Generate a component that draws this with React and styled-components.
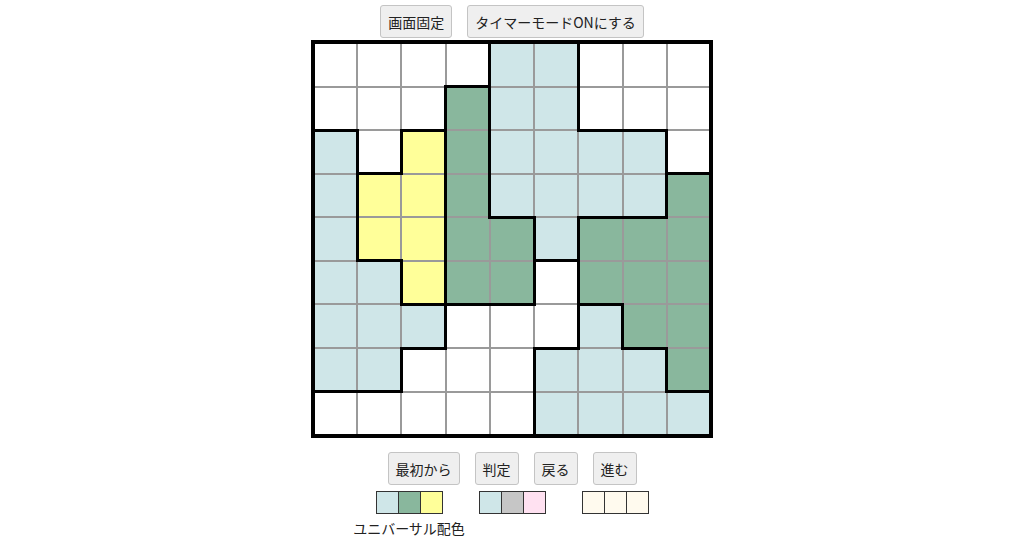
import React from 'react';
import styled, { createGlobalStyle } from 'styled-components';

const GlobalStyle = createGlobalStyle`
    body {
        margin: 0;
        background: #fff;
        font-family: "Noto Sans CJK JP", "Noto Sans", sans-serif;
        color: #222;
    }
`;

const COLORS = {
    W: '#ffffff',
    L: '#cfe6e8',
    G: '#89b79d',
    Y: '#ffff99',
};

const BOARD = [
    'WWWWLLWWW',
    'WWWGLLWWW',
    'LWYGLLLLW',
    'LYYGLLLLG',
    'LYYGGLGGG',
    'LLYGGWGGG',
    'LLLWWWLGG',
    'LLWWWLLLG',
    'WWWWWLLLL',
];

const PALETTES = [
    { colors: ['#cfe6e8', '#89b79d', '#ffff99'], label: 'ユニバーサル配色' },
    { colors: ['#cfe6e8', '#c6c6c6', '#ffe1f1'] },
    { colors: ['#fffaee', '#fffaee', '#fffaee'] },
];

const THIN = '2px solid #9a9a9a';
const THICK = '3px solid #000';
const EDGE = '4px solid #000';

const side = (r, c, dr, dc) => {
    const nr = r + dr;
    const nc = c + dc;
    if (nr < 0 || nr > 8 || nc < 0 || nc > 8) return EDGE;
    return BOARD[nr][nc] === BOARD[r][c] ? THIN : THICK;
};

const App = () => {
    return (
        <Page>
            <GlobalStyle />
            <ButtonRow>
                <Button>画面固定</Button>
                <Button>タイマーモードONにする</Button>
            </ButtonRow>
            <Board>
                <tbody>
                    {BOARD.map((row, r) => (
                        <tr key={r}>
                            {row.split('').map((k, c) => (
                                <Cell
                                    key={c}
                                    $bg={COLORS[k]}
                                    $top={side(r, c, -1, 0)}
                                    $bottom={side(r, c, 1, 0)}
                                    $left={side(r, c, 0, -1)}
                                    $right={side(r, c, 0, 1)}
                                />
                            ))}
                        </tr>
                    ))}
                </tbody>
            </Board>
            <ButtonRow $top="14px">
                <Button>最初から</Button>
                <Button>判定</Button>
                <Button>戻る</Button>
                <Button>進む</Button>
            </ButtonRow>
            <PaletteRow>
                {PALETTES.map((p, i) => (
                    <Palette key={i}>
                        <Swatches>
                            {p.colors.map((col, j) => (
                                <Swatch key={j} $bg={col} />
                            ))}
                        </Swatches>
                        {p.label && <PaletteLabel>{p.label}</PaletteLabel>}
                    </Palette>
                ))}
            </PaletteRow>
        </Page>
    );
};

const Page = styled.div`
    display: flex;
    flex-direction: column;
    align-items: center;
    padding-top: 5px;
    height: 533px;
    overflow: hidden;
`;

const ButtonRow = styled.div`
    display: flex;
    gap: 15px;
    margin-top: ${(p) => p.$top || '0'};
`;

const Button = styled.button`
    font-family: "Noto Sans CJK JP", "Noto Sans", sans-serif;
    font-size: 14px;
    color: #222;
    background: #efefef;
    border: 1px solid #c4c4c4;
    border-radius: 3px;
    height: 33px;
    padding: 0 7px;
    line-height: 1;
    cursor: pointer;
`;

const Board = styled.table`
    margin-top: 2px;
    border-collapse: collapse;
    table-layout: fixed;
    width: 402px;
    height: 400px;
`;

const Cell = styled.td`
    padding: 0;
    height: 41px;
    background: ${(p) => p.$bg};
    border-top: ${(p) => p.$top};
    border-bottom: ${(p) => p.$bottom};
    border-left: ${(p) => p.$left};
    border-right: ${(p) => p.$right};
`;

const PaletteRow = styled.div`
    display: flex;
    gap: 36px;
    margin-top: 6px;
`;

const Palette = styled.div`
    display: flex;
    flex-direction: column;
    align-items: center;
    width: 67px;
`;

const Swatches = styled.div`
    display: flex;
    border: 1px solid #333;
`;

const Swatch = styled.div`
    width: 21px;
    height: 21px;
    background: ${(p) => p.$bg};
    & + & {
        border-left: 1px solid #333;
    }
`;

const PaletteLabel = styled.div`
    margin-top: 4px;
    font-size: 14px;
    white-space: nowrap;
    line-height: 20px;
`;

export default App;
